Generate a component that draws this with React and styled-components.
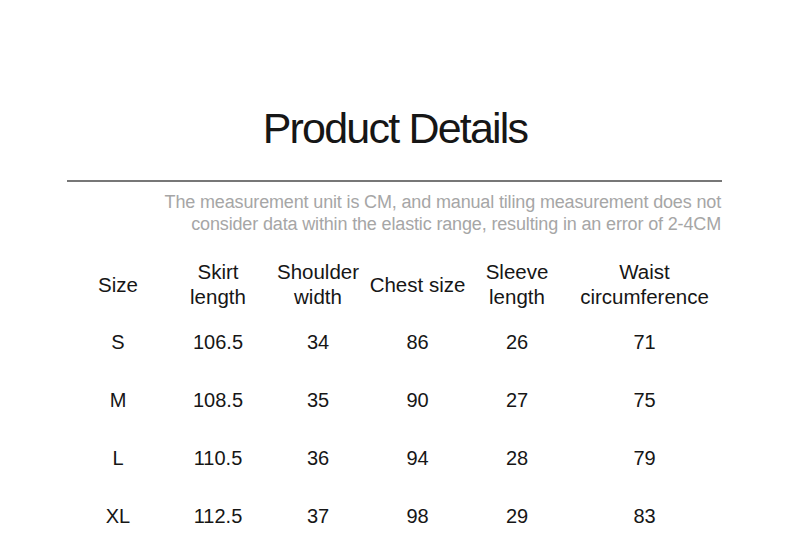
import React from "react";
import styled, { createGlobalStyle } from "styled-components";

const GlobalStyle = createGlobalStyle`
  html, body {
    margin: 0;
    padding: 0;
    background: #ffffff;
  }
  body {
    font-family: "Liberation Sans", Arial, sans-serif;
    color: #1c1c1c;
  }
`;

const Page = styled.div`
  width: 790px;
  height: 545px;
  overflow: hidden;
  padding-top: 103px;
  box-sizing: border-box;
`;

const Title = styled.h1`
  margin: 0;
  text-align: center;
  font-size: 43px;
  line-height: 50px;
  font-weight: 400;
  letter-spacing: -1.8px;
  color: #161616;
`;

const Rule = styled.div`
  margin: 27px 68px 0 67px;
  height: 2px;
  background: #777777;
`;

const Note = styled.p`
  margin: 9px 69px 0 0;
  text-align: right;
  font-size: 18px;
  line-height: 22px;
  letter-spacing: -0.15px;
  color: #a6a6a6;
`;

const Table = styled.div`
  margin: 24px 0 0 68px;
  width: 654px;
  display: grid;
  grid-template-columns: 100px 100px 100px 99px 100px 155px;
`;

const HeadCell = styled.div`
  height: 50px;
  display: flex;
  align-items: center;
  justify-content: center;
  text-align: center;
  font-size: 20.5px;
  line-height: 25px;
  letter-spacing: 0;
  color: #161616;
  margin-bottom: 4px;
`;

const Cell = styled.div`
  height: 58px;
  display: flex;
  align-items: center;
  justify-content: center;
  font-size: 20px;
  letter-spacing: 0;
  color: #161616;
`;

const headers = [
  ["Size"],
  ["Skirt", "length"],
  ["Shoulder", "width"],
  ["Chest size"],
  ["Sleeve", "length"],
  ["Waist", "circumference"],
];

const rows = [
  ["S", "106.5", "34", "86", "26", "71"],
  ["M", "108.5", "35", "90", "27", "75"],
  ["L", "110.5", "36", "94", "28", "79"],
  ["XL", "112.5", "37", "98", "29", "83"],
];

export default function App() {
  return (
    <Page>
      <GlobalStyle />
      <Title>Product Details</Title>
      <Rule />
      <Note>
        The measurement unit is CM, and manual tiling measurement does not
        <br />
        consider data within the elastic range, resulting in an error of 2-4CM
      </Note>
      <Table>
        {headers.map((h, i) => (
          <HeadCell key={"h" + i}>
            <span>
              {h.map((line, j) => (
                <React.Fragment key={j}>
                  {j > 0 && <br />}
                  {line}
                </React.Fragment>
              ))}
            </span>
          </HeadCell>
        ))}
        {rows.map((r, i) =>
          r.map((v, j) => <Cell key={i + "-" + j}>{v}</Cell>)
        )}
      </Table>
    </Page>
  );
}
